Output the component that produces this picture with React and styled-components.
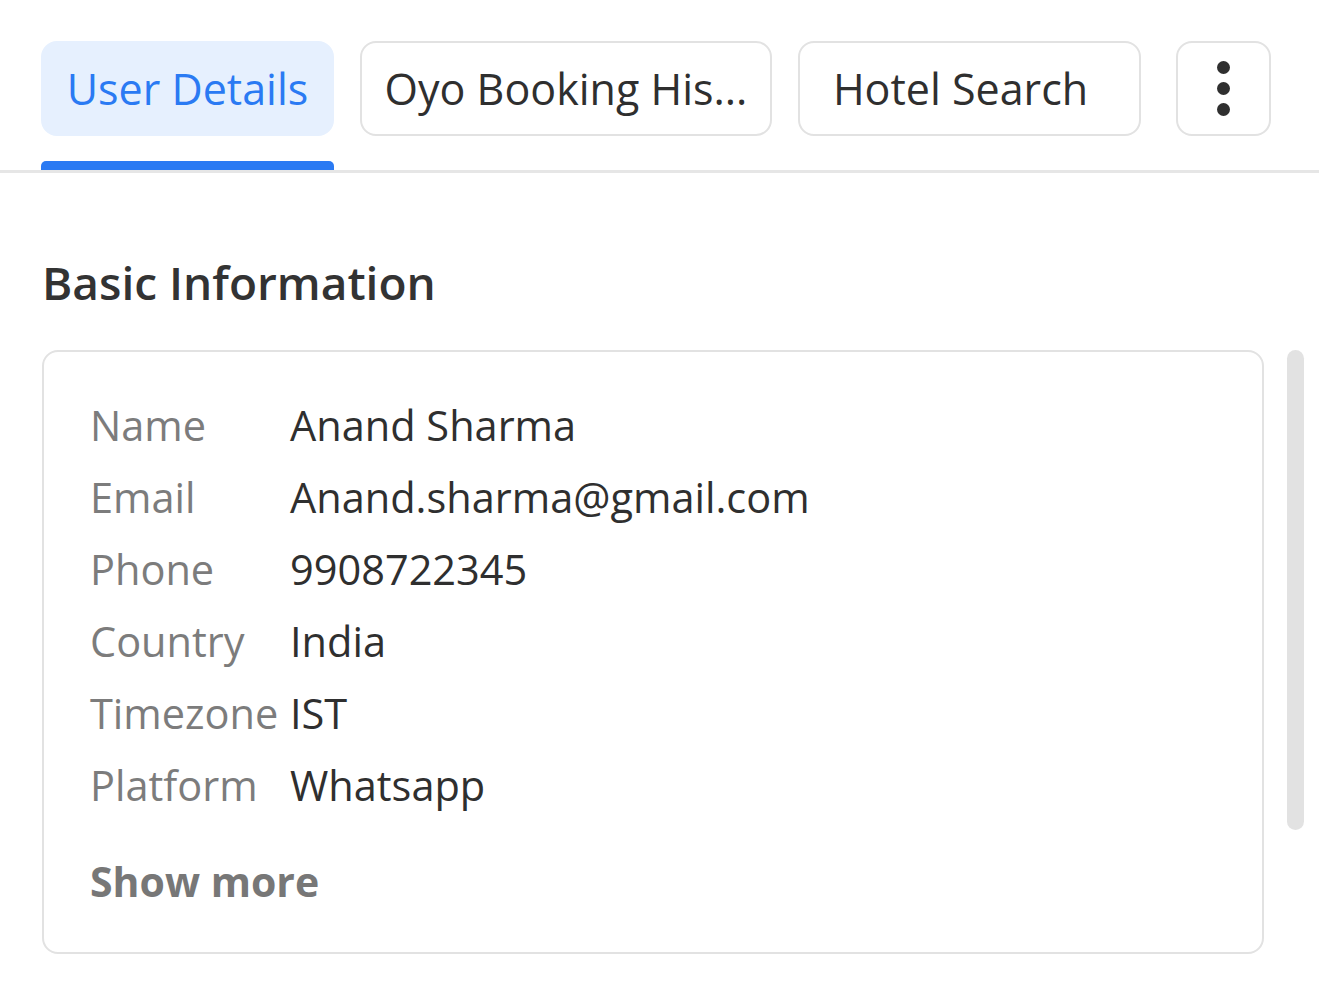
import React from "react";
import styled, { createGlobalStyle } from "styled-components";

const rows = [
  { label: "Name", value: "Anand Sharma" },
  { label: "Email", value: "Anand.sharma@gmail.com" },
  { label: "Phone", value: "9908722345" },
  { label: "Country", value: "India" },
  { label: "Timezone", value: "IST" },
  { label: "Platform", value: "Whatsapp" },
];

function App() {
  return (
    <>
      <GlobalStyle />
      <Page>
        <TabBar>
          <TabSlot>
            <Tab $active $width="293px">User Details</Tab>
            <Indicator />
          </TabSlot>
          <TabSlot>
            <Tab $width="412px">Oyo Booking His...</Tab>
          </TabSlot>
          <TabSlot>
            <Tab $width="343px" $padding="0 30px 0 12px">Hotel Search</Tab>
          </TabSlot>
          <TabSlot>
            <MoreButton aria-label="More">
              <Dot />
              <Dot />
              <Dot />
            </MoreButton>
          </TabSlot>
        </TabBar>

        <Body>
          <Heading>Basic Information</Heading>
          <CardArea>
            <Card>
              <InfoList>
                {rows.map((row) => (
                  <InfoRow key={row.label}>
                    <Label>{row.label}</Label>
                    <Value>{row.value}</Value>
                  </InfoRow>
                ))}
              </InfoList>
              <ShowMore>Show more</ShowMore>
            </Card>
            <ScrollThumb />
          </CardArea>
        </Body>
      </Page>
    </>
  );
}

export default App;

// styles
const GlobalStyle = createGlobalStyle`
  body {
    margin: 0;
    background: #fff;
    font-family: "Open Sans", "Noto Sans", sans-serif;
    color: #333;
  }
`;

const Page = styled.div`
  width: 1319px;
`;

const TabBar = styled.div`
  display: flex;
  gap: 26px;
  padding: 41px 0 0 41px;
  border-bottom: 3px solid #e6e6e6;
`;

const TabSlot = styled.div`
  display: flex;
  flex-direction: column;
  gap: 25px;
`;

const Tab = styled.div`
  box-sizing: border-box;
  height: 95px;
  width: ${(p) => p.$width || "auto"};
  padding: ${(p) => p.$padding || "0 12px"};
  display: flex;
  align-items: center;
  justify-content: center;
  border-radius: 16px;
  font-size: 43px;
  white-space: nowrap;
  background: ${(p) => (p.$active ? "#e6f0fe" : "#fff")};
  color: ${(p) => (p.$active ? "#2a7af3" : "#2f2f2f")};
  border: 2px solid ${(p) => (p.$active ? "#e6f0fe" : "#e2e2e2")};
`;

const Indicator = styled.div`
  height: 9px;
  border-radius: 5px 5px 0 0;
  background: #2a7af3;
`;

const MoreButton = styled.div`
  box-sizing: border-box;
  width: 95px;
  height: 95px;
  margin-left: 9px;
  border: 2px solid #e2e2e2;
  border-radius: 16px;
  display: flex;
  flex-direction: column;
  align-items: center;
  justify-content: center;
  gap: 8px;
`;

const Dot = styled.span`
  width: 13px;
  height: 13px;
  border-radius: 50%;
  background: #2f2f2f;
`;

const Body = styled.div`
  padding: 84px 0 0 42px;
`;

const Heading = styled.h2`
  margin: 0 0 43px;
  font-size: 46px;
  font-weight: 600;
  color: #333;
  line-height: 50px;
`;

const CardArea = styled.div`
  display: flex;
  gap: 23px;
  align-items: flex-start;
`;

const Card = styled.div`
  box-sizing: border-box;
  width: 1222px;
  height: 604px;
  border: 2px solid #e2e2e2;
  border-radius: 16px;
  padding: 37px 46px;
`;

const InfoList = styled.div`
  display: flex;
  flex-direction: column;
`;

const InfoRow = styled.div`
  display: flex;
  height: 72px;
  align-items: center;
  font-size: 41.5px;
`;

const Label = styled.span`
  width: 200px;
  flex-shrink: 0;
  color: #7c7c7c;
`;

const Value = styled.span`
  color: #2f2f2f;
`;

const ShowMore = styled.div`
  margin-top: 32px;
  font-size: 41px;
  font-weight: 700;
  color: #777;
`;

const ScrollThumb = styled.div`
  width: 17px;
  height: 480px;
  border-radius: 9px;
  background: #e2e2e2;
`;
